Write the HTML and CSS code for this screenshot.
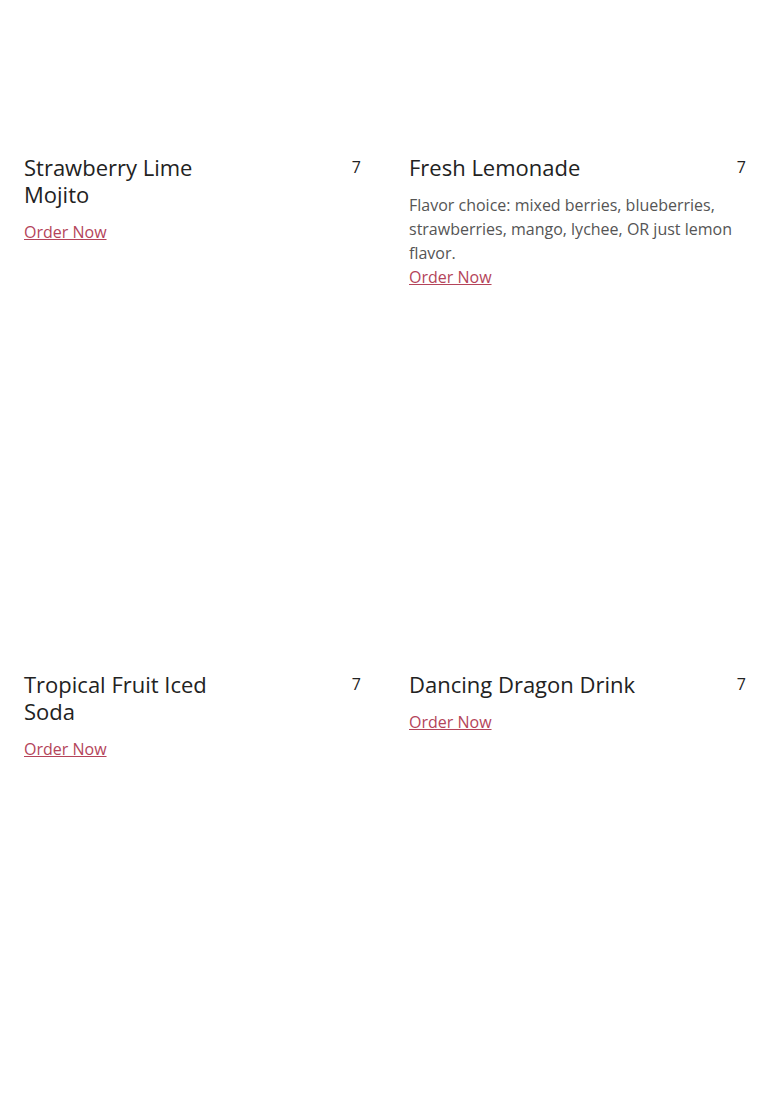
FILE: index.html
```html
<!DOCTYPE html>
<html lang="en">
<head>
  <meta charset="UTF-8" />
  <meta name="viewport" content="width=device-width, initial-scale=1.0"/>
  <title>Drinks</title>
  <link rel="stylesheet" href="styles.css">
</head>
<body>
  <div class="menu-grid">

    <!-- Strawberry Lime Mojito -->
    <div class="menu-item">
      <div class="item-photo"></div>
      <div class="item-head">
        <h3 class="item-name">Strawberry Lime Mojito</h3>
        <span class="item-price">7</span>
      </div>
      <a href="#" class="order-link">Order Now</a>
    </div>

    <!-- Fresh Lemonade -->
    <div class="menu-item">
      <div class="item-photo"></div>
      <div class="item-head">
        <h3 class="item-name">Fresh Lemonade</h3>
        <span class="item-price">7</span>
      </div>
      <p class="item-desc">Flavor choice: mixed berries, blueberries, strawberries, mango, lychee, OR just lemon flavor.</p>
      <a href="#" class="order-link">Order Now</a>
    </div>

    <!-- Tropical Fruit Iced Soda -->
    <div class="menu-item">
      <div class="item-photo"></div>
      <div class="item-head">
        <h3 class="item-name">Tropical Fruit Iced Soda</h3>
        <span class="item-price">7</span>
      </div>
      <a href="#" class="order-link">Order Now</a>
    </div>

    <!-- Dancing Dragon Drink -->
    <div class="menu-item">
      <div class="item-photo"></div>
      <div class="item-head">
        <h3 class="item-name">Dancing Dragon Drink</h3>
        <span class="item-price">7</span>
      </div>
      <a href="#" class="order-link">Order Now</a>
    </div>

  </div>
</body>
</html>
```

FILE: styles.css
```css
:root {
  --text-dark: #222;
  --text-muted: #555;
  --link: #b4445a;
}

/* Reset */
* { margin: 0; padding: 0; box-sizing: border-box; }

body {
  font-family: 'Open Sans', 'Noto Sans', sans-serif;
  background: #fff;
  color: var(--text-dark);
}

.menu-grid {
  display: grid;
  grid-template-columns: 1fr 1fr;
  column-gap: 48px;
  row-gap: 228px;
  padding: 0 24px;
}

.item-photo {
  height: 138px;
  margin-bottom: 16px;
}

.item-head {
  display: flex;
  justify-content: space-between;
  align-items: flex-start;
  margin-bottom: 12px;
}
.item-name {
  max-width: 70%;
  font-size: 22px;
  line-height: 27px;
  font-weight: 400;
  color: var(--text-dark);
}
.item-price {
  padding-top: 1px;
  font-size: 16px;
  line-height: 24px;
  color: var(--text-dark);
}

.item-desc {
  font-size: 16px;
  line-height: 24px;
  color: var(--text-muted);
}

.order-link {
  display: inline-block;
  font-size: 16px;
  line-height: 24px;
  color: var(--link);
  text-decoration: underline;
}
```
